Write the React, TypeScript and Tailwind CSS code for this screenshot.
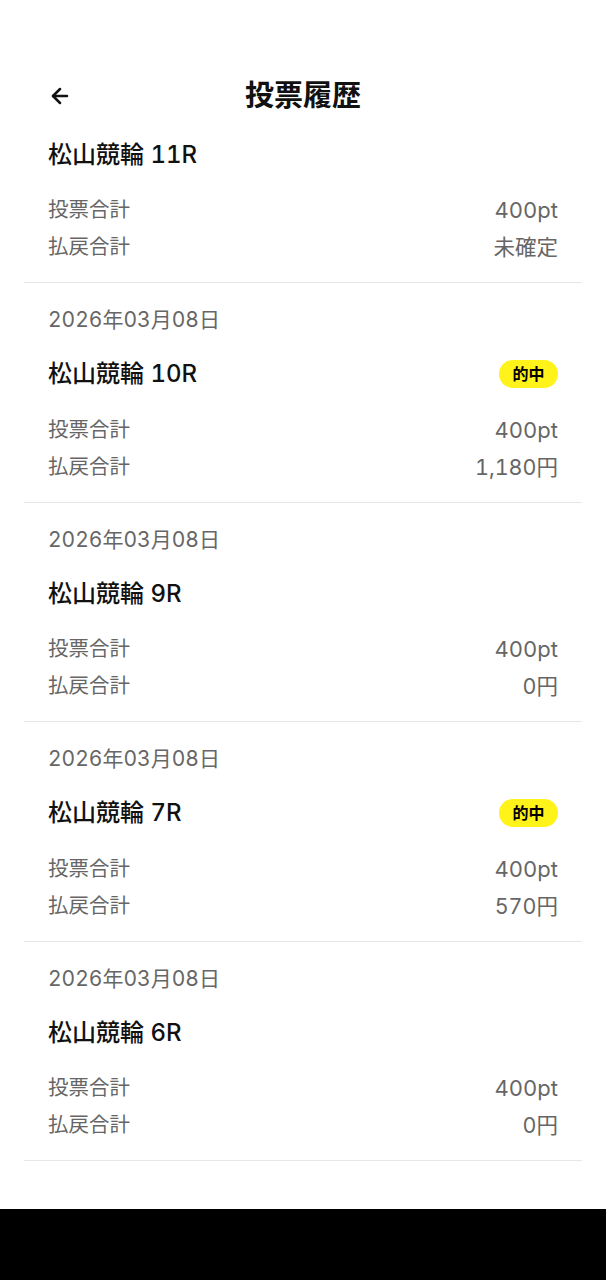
import { ArrowLeft } from 'lucide-react';

type Entry = {
  date?: string;
  race: string;
  bet: string;
  payout: string;
  hit?: boolean;
};

const entries: Entry[] = [
  { race: '松山競輪 11R', bet: '400pt', payout: '未確定' },
  { date: '2026年03月08日', race: '松山競輪 10R', bet: '400pt', payout: '1,180円', hit: true },
  { date: '2026年03月08日', race: '松山競輪 9R', bet: '400pt', payout: '0円' },
  { date: '2026年03月08日', race: '松山競輪 7R', bet: '400pt', payout: '570円', hit: true },
  { date: '2026年03月08日', race: '松山競輪 6R', bet: '400pt', payout: '0円' },
];

const HistoryItem = ({ entry }: { entry: Entry }) => (
  <div
    className={`border-b border-[#e6e6e6] px-6 ${entry.date ? 'pt-[23px] pb-[19.5px]' : 'pt-[11px] pb-[20px]'}`}
  >
    {entry.date && (
      <div className="mb-[24px] flex h-[28px] items-center text-[21px] text-[#666] tabular-nums">{entry.date}</div>
    )}
    <div className="flex h-[32px] items-center justify-between">
      <span className="text-[24px] font-medium text-[#111] tabular-nums">{entry.race}</span>
      {entry.hit && (
        <span className="flex h-[28px] w-[59px] items-center justify-center rounded-full bg-[#fff31a] text-[16px] font-bold text-black">
          的中
        </span>
      )}
    </div>
    <div className={`${entry.date ? 'mt-[25px]' : 'mt-[24px]'} flex flex-col gap-[7px] text-[#666]`}>
      <div className="flex h-[30px] items-center justify-between">
        <span className="text-[20.5px]">投票合計</span>
        <span className="text-[22px] tabular-nums">{entry.bet}</span>
      </div>
      <div className="flex h-[30px] items-center justify-between">
        <span className="text-[20.5px]">払戻合計</span>
        <span className="text-[21.5px] tabular-nums">{entry.payout}</span>
      </div>
    </div>
  </div>
);

export default function App() {
  return (
    <div
      className="flex min-h-screen flex-col bg-white"
      style={{ fontFamily: 'Inter, "Noto Sans CJK JP", sans-serif' }}
    >
      <div className="flex-1">
        <div className="mt-[64px] flex h-[64px] items-center px-12">
          <button className="flex h-8 w-8 items-center justify-start text-[#111]">
            <ArrowLeft size={24} strokeWidth={2.5} />
          </button>
          <h1 className="flex-1 pr-8 text-center text-[29px] font-bold text-[#111]">投票履歴</h1>
        </div>
        <div className="px-6">
          {entries.map((e, i) => (
            <HistoryItem key={i} entry={e} />
          ))}
        </div>
      </div>
      <div className="h-[71px] bg-black" />
    </div>
  );
}
